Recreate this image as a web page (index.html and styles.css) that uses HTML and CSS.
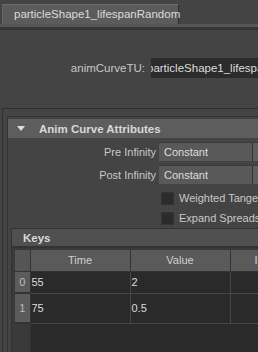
FILE: index.html
```html
<!DOCTYPE html>
<html lang="en">
<head>
    <meta charset="UTF-8">
    <title>animCurveTU</title>
    <link rel="stylesheet" href="styles.css">
</head>
<body>
    <div class="tabs">
        <div class="tab">particleShape1_lifespanRandom</div>
    </div>
    <div class="tab-rule"></div>

    <div class="node-row">
        <span class="node-label">animCurveTU:</span>
        <div class="node-field"><span>particleShape1_lifespanRandom</span></div>
    </div>

    <div class="panel">
        <div class="section">
            <div class="section-head">
                <span class="arrow"></span>
                <span>Anim Curve Attributes</span>
            </div>
            <div class="section-body">
                <div class="attr-row">
                    <label class="attr-label">Pre Infinity</label>
                    <div class="dropdown"><span class="dd-text">Constant</span><span class="dd-btn"></span></div>
                </div>
                <div class="attr-row">
                    <label class="attr-label">Post Infinity</label>
                    <div class="dropdown"><span class="dd-text">Constant</span><span class="dd-btn"></span></div>
                </div>
                <div class="check-row">
                    <span class="checkbox"></span>
                    <span>Weighted Tangents</span>
                </div>
                <div class="check-row">
                    <span class="checkbox"></span>
                    <span>Expand Spreadsheet</span>
                </div>

                <div class="keys">
                    <div class="keys-head">Keys</div>
                    <div class="keys-body">
                        <table class="keys-table">
                            <thead>
                                <tr>
                                    <th class="corner"></th>
                                    <th>Time</th>
                                    <th>Value</th>
                                    <th>In Tangent</th>
                                </tr>
                            </thead>
                            <tbody>
                                <tr class="row0">
                                    <td class="idx">0</td>
                                    <td>55</td>
                                    <td>2</td>
                                    <td></td>
                                </tr>
                                <tr class="row1">
                                    <td class="idx">1</td>
                                    <td>75</td>
                                    <td>0.5</td>
                                    <td></td>
                                </tr>
                                <tr class="fill">
                                    <td class="idx-empty"></td>
                                    <td></td>
                                    <td></td>
                                    <td></td>
                                </tr>
                            </tbody>
                        </table>
                    </div>
                </div>
            </div>
        </div>
    </div>
</body>
</html>
```

FILE: styles.css
```css
* {
    box-sizing: border-box;
}
body {
    margin: 0;
    width: 258px;
    height: 352px;
    overflow: hidden;
    background-color: #444;
    font-family: "Liberation Sans", Arial, sans-serif;
    font-size: 11px;
    color: #c8c8c8;
}
.tabs {
    height: 24px;
    padding: 4px 0 0 2px;
}
.tab {
    width: 177px;
    height: 20px;
    line-height: 19px;
    padding-left: 11px;
    background-color: #5b5b5b;
    border-top: 1px solid #6a6a6a;
    border-left: 1px solid #666;
    border-right: 1px solid #2e2e2e;
    color: #dcdcdc;
    font-size: 11.5px;
    white-space: nowrap;
}
.tab-rule {
    height: 6px;
    background-color: #575757;
    border-bottom: 3px solid #363636;
}
.node-row {
    display: flex;
    align-items: center;
    margin-top: 28px;
    height: 20px;
}
.node-label {
    width: 146px;
    text-align: right;
    padding-right: 1px;
    font-size: 11.5px;
}
.node-field {
    margin-left: 5px;
    flex: 1;
    height: 20px;
    line-height: 20px;
    background-color: #2b2b2b;
    color: #ddd;
    font-size: 11.5px;
    overflow: hidden;
    white-space: nowrap;
}
.node-field span {
    display: inline-block;
    margin-left: -4px;
}
.panel {
    margin: 30px 0 0 2px;
    border-top: 1px solid #2f2f2f;
    border-left: 1px solid #2f2f2f;
    padding: 7px 0 0 4px;
}
.section {
    border-top: 1px solid #333;
    border-left: 1px solid #333;
    padding-top: 2px;
}
.section-head {
    display: flex;
    align-items: center;
    height: 19px;
    background-color: #5d5d5d;
    font-weight: bold;
    font-size: 11.5px;
    color: #d8d8d8;
}
.arrow {
    width: 0;
    height: 0;
    margin: 0 14px 0 9px;
    border-left: 4px solid transparent;
    border-right: 4px solid transparent;
    border-top: 5px solid #ddd;
}
.section-body {
    padding-top: 4px;
}
.attr-row {
    display: flex;
    align-items: center;
    height: 19px;
    margin-bottom: 4px;
}
.attr-label {
    width: 148px;
    text-align: right;
}
.dropdown {
    display: flex;
    margin-left: 3px;
    flex: 1;
    height: 19px;
    line-height: 18px;
    background-color: #595959;
    border-top: 1px solid #3a3a3a;
    color: #ddd;
}
.dd-text {
    width: 94px;
    padding-left: 5px;
    border-right: 1px solid #333;
}
.dd-btn {
    flex: 1;
    background-color: #5f5f5f;
}
.check-row {
    display: flex;
    align-items: center;
    height: 20px;
    padding-left: 153px;
    white-space: nowrap;
}
.checkbox {
    flex-shrink: 0;
    width: 13px;
    height: 13px;
    margin-right: 5px;
    background-color: #2b2b2b;
    border: 1px solid #333;
}
.keys {
    border-top: 1px solid #333;
    border-left: 1px solid #333;
    margin-left: 3px;
}
.keys-head {
    height: 19px;
    line-height: 19px;
    padding-left: 11px;
    background-color: #505050;
    border-bottom: 2px solid #333;
    font-weight: bold;
    font-size: 11.5px;
    color: #d8d8d8;
}
.keys-body {
    padding: 2px 0 0 3px;
    background-color: #3a3a3a;
}
.keys-table {
    width: 315px;
    border-collapse: collapse;
    table-layout: fixed;
    background-color: #2a2a2a;
}
.keys-table th {
    width: 100px;
    height: 21px;
    padding: 0;
    background-color: #5a5a5a;
    border-right: 1px solid #333;
    border-bottom: 1px solid #333;
    font-weight: normal;
    color: #cfcfcf;
    text-align: center;
    white-space: nowrap;
    overflow: hidden;
}
.keys-table th.corner {
    width: 15px;
    background-color: #555;
}
.keys-table td {
    padding: 0 0 0 1px;
    border-right: 1px solid #474747;
    border-bottom: 1px solid #474747;
    color: #ddd;
}
.keys-table td.idx {
    padding: 0;
    background-color: #5b5b5b;
    border-right: 1px solid #333;
    border-bottom: 2px solid #333;
    text-align: center;
    color: #bbb;
}
.row0 td {
    height: 22px;
}
.row1 td {
    height: 30px;
}
.fill td {
    height: 60px;
    border: none;
}
.keys-table td.idx-empty {
    background-color: #3a3a3a;
    border-right: 1px solid #333;
}
```
